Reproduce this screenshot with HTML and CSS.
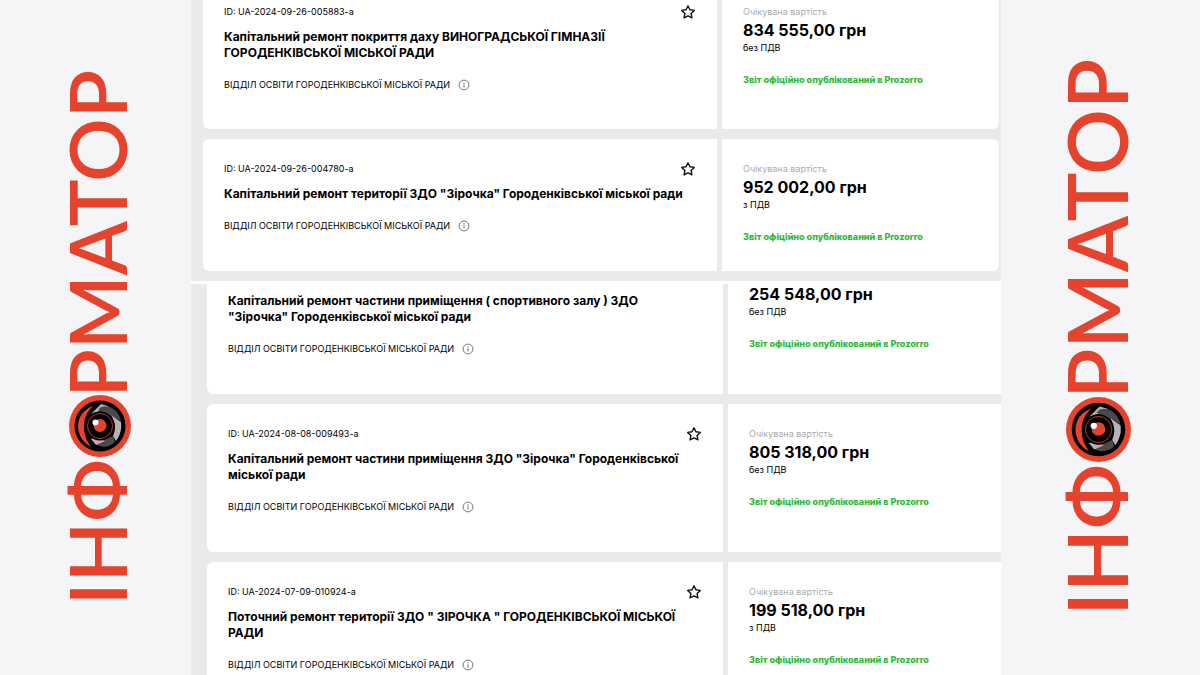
FILE: index.html
```html
<!DOCTYPE html>
<html lang="uk">
<head>
<title>Інформатор - закупівлі</title>
<meta charset="UTF-8">
<meta name="viewport" content="width=device-width, initial-scale=1.0">
<link rel="stylesheet" href="styles.css">
</head>
<body>

<svg class="sprite" aria-hidden="true">
  <symbol id="star" viewBox="0 0 16 16">
    <path d="M8 1.800l1.900 4 4.400.6-3.200 3.100.8 4.400L8 11.800l-3.900 2.100.8-4.400L1.700 6.400l4.400-.6z" fill="none" stroke="#111" stroke-width="1.400" stroke-linejoin="round"/>
  </symbol>
  <symbol id="info" viewBox="0 0 12 12">
    <circle cx="6" cy="6" r="4.900" fill="none" stroke="#777" stroke-width="1"/>
    <path d="M6 5.200v3.400M6 3.300v1.100" stroke="#777" stroke-width="1.100"/>
  </symbol>
  <symbol id="eye" viewBox="0 0 62 62">
    <circle cx="31" cy="31" r="31" fill="#e5432d"/>
    <circle cx="31" cy="31" r="25.500" fill="#000"/>
    <path d="M24 11C15 14 9 22 9 31s5 17 13 20.500C17 45 15 39 15 31s3-14 9-20z" fill="#e5432d"/>
    <path d="M22 19l10-10 7 2 4 6-12-1z" fill="#b5b3b6"/>
    <path d="M32 12c9-3 18 4 20 14l-9-5-14-6z" fill="#4b494b"/>
    <path d="M42 20l10 7c1 7-1 14-5 19l-3-5c3-7 3-13-2-21z" fill="#b5b3b6"/>
    <path d="M27 48l17-7 2 6c-5 5-12 6-18 3z" fill="#4b494b"/>
    <path d="M22 44l5-2 9 4-9 4z" fill="#b5b3b6"/>
    <circle cx="31" cy="31" r="14.500" fill="#000"/>
    <circle cx="31" cy="31" r="12.500" fill="none" stroke="#e5432d" stroke-width=".8"/>
    <circle cx="31" cy="30.500" r="6.500" fill="#e5432d"/>
    <circle cx="26.500" cy="27.500" r="3" fill="#fff"/>
  </symbol>
</svg>

<aside class="brand">
  <span class="brand-text">РМАТОР</span>
  <svg class="eye" role="img" aria-label="О"><use href="#eye"/></svg>
  <span class="brand-text">ІНФ</span>
</aside>

<main>
  <section class="list list-top">
    <article class="card cut">
      <div class="info">
        <div class="row">
          <p class="id">ID: UA-2024-09-26-005883-a</p>
          <button class="fav" aria-label="Додати в обране"><svg><use href="#star"/></svg></button>
        </div>
        <h3><a href="#">Капітальний ремонт покриття даху ВИНОГРАДСЬКОЇ ГІМНАЗІЇ ГОРОДЕНКІВСЬКОЇ МІСЬКОЇ РАДИ</a></h3>
        <p class="org">ВІДДІЛ ОСВІТИ ГОРОДЕНКІВСЬКОЇ МІСЬКОЇ РАДИ <button class="tip" aria-label="Інформація"><svg><use href="#info"/></svg></button></p>
      </div>
      <div class="cost">
        <p class="label">Очікувана вартість</p>
        <p class="price">834 555,00 грн</p>
        <p class="vat">без ПДВ</p>
        <a class="report" href="#">Звіт офіційно опублікований в Prozorro</a>
      </div>
    </article>

    <article class="card">
      <div class="info">
        <div class="row">
          <p class="id">ID: UA-2024-09-26-004780-a</p>
          <button class="fav" aria-label="Додати в обране"><svg><use href="#star"/></svg></button>
        </div>
        <h3><a href="#">Капітальний ремонт території ЗДО "Зірочка" Городенківської міської ради</a></h3>
        <p class="org">ВІДДІЛ ОСВІТИ ГОРОДЕНКІВСЬКОЇ МІСЬКОЇ РАДИ <button class="tip" aria-label="Інформація"><svg><use href="#info"/></svg></button></p>
      </div>
      <div class="cost">
        <p class="label">Очікувана вартість</p>
        <p class="price">952 002,00 грн</p>
        <p class="vat">з ПДВ</p>
        <a class="report" href="#">Звіт офіційно опублікований в Prozorro</a>
      </div>
    </article>
  </section>

  <section class="list list-bottom">
    <article class="card no-id">
      <div class="info">
        <h3><a href="#">Капітальний ремонт частини приміщення ( спортивного залу ) ЗДО "Зірочка" Городенківської міської ради</a></h3>
        <p class="org">ВІДДІЛ ОСВІТИ ГОРОДЕНКІВСЬКОЇ МІСЬКОЇ РАДИ <button class="tip" aria-label="Інформація"><svg><use href="#info"/></svg></button></p>
      </div>
      <div class="cost">
        <p class="price">254 548,00 грн</p>
        <p class="vat">без ПДВ</p>
        <a class="report" href="#">Звіт офіційно опублікований в Prozorro</a>
      </div>
    </article>

    <article class="card">
      <div class="info">
        <div class="row">
          <p class="id">ID: UA-2024-08-08-009493-a</p>
          <button class="fav" aria-label="Додати в обране"><svg><use href="#star"/></svg></button>
        </div>
        <h3><a href="#">Капітальний ремонт частини приміщення ЗДО "Зірочка" Городенківської міської ради</a></h3>
        <p class="org">ВІДДІЛ ОСВІТИ ГОРОДЕНКІВСЬКОЇ МІСЬКОЇ РАДИ <button class="tip" aria-label="Інформація"><svg><use href="#info"/></svg></button></p>
      </div>
      <div class="cost">
        <p class="label">Очікувана вартість</p>
        <p class="price">805 318,00 грн</p>
        <p class="vat">без ПДВ</p>
        <a class="report" href="#">Звіт офіційно опублікований в Prozorro</a>
      </div>
    </article>

    <article class="card">
      <div class="info">
        <div class="row">
          <p class="id">ID: UA-2024-07-09-010924-a</p>
          <button class="fav" aria-label="Додати в обране"><svg><use href="#star"/></svg></button>
        </div>
        <h3><a href="#">Поточний ремонт території ЗДО " ЗІРОЧКА " ГОРОДЕНКІВСЬКОЇ МІСЬКОЇ РАДИ</a></h3>
        <p class="org">ВІДДІЛ ОСВІТИ ГОРОДЕНКІВСЬКОЇ МІСЬКОЇ РАДИ <button class="tip" aria-label="Інформація"><svg><use href="#info"/></svg></button></p>
      </div>
      <div class="cost">
        <p class="label">Очікувана вартість</p>
        <p class="price">199 518,00 грн</p>
        <p class="vat">з ПДВ</p>
        <a class="report" href="#">Звіт офіційно опублікований в Prozorro</a>
      </div>
    </article>
  </section>
</main>

<aside class="brand brand-big">
  <span class="brand-text">РМАТОР</span>
  <svg class="eye" role="img" aria-label="О"><use href="#eye"/></svg>
  <span class="brand-text">ІНФ</span>
</aside>

</body>
</html>
```
FILE: styles.css
```css
* {
  box-sizing: border-box;
}

body {
  margin: 0;
  height: 100vh;
  overflow: hidden;
  display: grid;
  grid-template-columns: 191px 1fr 199px;
  grid-template-rows: 100vh;
  background: #f5f5f7;
  color: #000;
  font-family: Inter, "Liberation Sans", sans-serif;
  font-size: 9px;
  line-height: 16px;
}

p, h3 {
  margin: 0;
}

a {
  color: inherit;
  text-decoration: none;
}

button {
  display: flex;
  padding: 0;
  border: 0;
  background: none;
  cursor: pointer;
}

.sprite {
  position: absolute;
  width: 0;
  height: 0;
}

/* side logos */
.brand {
  display: flex;
  flex-direction: column;
  align-items: center;
  justify-content: center;
  padding-left: 8px;
  color: #e5432d;
  font-family: Lato, sans-serif;
  font-size: 79px;
  font-weight: 600;
  line-height: 100px;
}

.brand-text {
  margin-right: 6px;
  writing-mode: vertical-rl;
  transform: rotate(180deg);
}

.eye {
  width: 62px;
  height: 62px;
  margin-top: -2px;
  margin-bottom: 2px;
  flex: none;
}

.brand-big {
  padding-left: 0;
  padding-right: 4px;
  font-size: 82px;
}

.brand-big .eye {
  width: 65px;
  height: 65px;
}

/* tender lists */
.list {
  display: flex;
  flex-direction: column;
  gap: 10px;
  background: #eaeaea;
}

.list-top {
  padding: 0 2px 10px 12px;
  border-bottom: 3px solid #fff;
}

.list-bottom {
  padding-left: 16px;
}

.card {
  display: grid;
  grid-template-columns: 514px 1fr;
  gap: 5px;
}

.list-bottom .card {
  grid-template-columns: 516px 1fr;
}

.info, .cost {
  padding: 22px 21px 37px;
  background: #fff;
}

.cost {
  padding-bottom: 20px;
}

.info {
  border-radius: 6px 0 0 6px;
}

.list-top .cost {
  border-radius: 0 6px 6px 0;
}

.cut .info, .cut .cost {
  padding-top: 4px;
  padding-bottom: 36px;
  border-top-left-radius: 0;
  border-top-right-radius: 0;
}

.no-id .info {
  padding-top: 9px;
  border-top-left-radius: 0;
}

.no-id .cost {
  padding-top: 0;
}

.row {
  display: flex;
  justify-content: space-between;
  margin-bottom: 9px;
}

.fav svg {
  width: 16px;
  height: 16px;
}

h3 {
  margin-bottom: 16px;
  padding-right: 10px;
  font-size: 12px;
  font-weight: 700;
}

.org {
  display: flex;
  align-items: center;
  gap: 8px;
}

.tip svg {
  width: 12px;
  height: 12px;
}

.label {
  color: #aaa;
}

.price {
  font-size: 16px;
  font-weight: 700;
  line-height: 20px;
}

.vat {
  margin-bottom: 16px;
}

.report {
  color: #2dba3c;
  font-weight: 800;
}
```
